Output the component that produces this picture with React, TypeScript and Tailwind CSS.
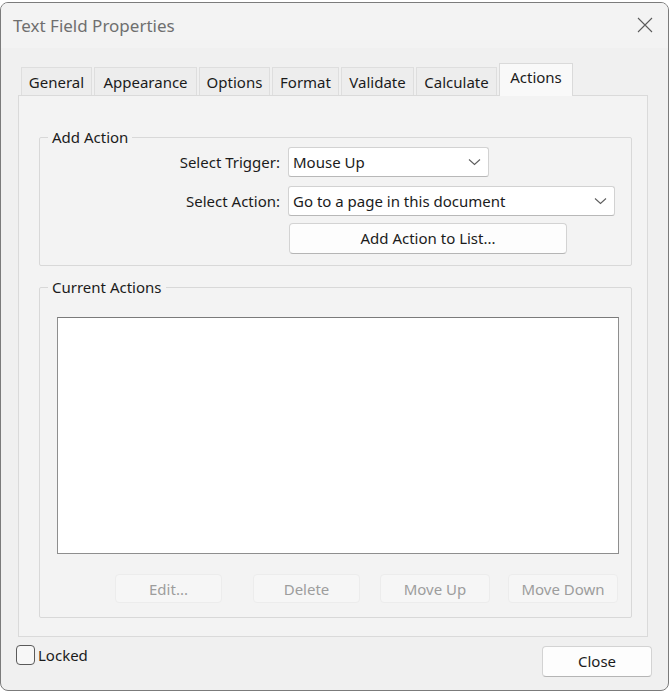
import React from 'react'

const font = { fontFamily: '"Noto Sans", "Open Sans", sans-serif' }

// tab label + pixel width as measured from the dialog
const tabs = [
  { label: 'General', w: 'w-[71px]' },
  { label: 'Appearance', w: 'w-[103px]' },
  { label: 'Options', w: 'w-[71px]' },
  { label: 'Format', w: 'w-[67px]' },
  { label: 'Validate', w: 'w-[73px]' },
  { label: 'Calculate', w: 'w-[81px]' },
]

function Chevron() {
  return (
    <svg width="13" height="8" viewBox="0 0 13 8" className="shrink-0">
      <path d="M1 1.5 L6.5 6.5 L12 1.5" fill="none" stroke="#5f5f5f" strokeWidth="1.1" />
    </svg>
  )
}

function Dropdown({ value, width }: { value: string; width: string }) {
  return (
    <div
      className={`${width} h-[30px] flex items-center justify-between pl-[4px] pr-[7px] bg-white border border-[#d2d2d2] border-b-[#b8b8b8] rounded-[3px] text-[15px] text-[#1b1b1b]`}
    >
      <span>{value}</span>
      <Chevron />
    </div>
  )
}

function DisabledButton({ label, width, ml }: { label: string; width: string; ml: string }) {
  return (
    <div
      className={`${width} ${ml} h-[29px] flex items-center justify-center rounded-[4px] bg-[#f6f6f6] border border-[#ececec] text-[15px] text-[#9d9d9d] pt-[1px]`}
    >
      {label}
    </div>
  )
}

export default function App() {
  return (
    <div className="w-[670px] h-[696px] bg-white pt-[2px]" style={font}>
      <div className="w-[669px] h-[689px] border border-[#7b7b7b] rounded-[8px] overflow-hidden bg-[#f0f0f0] flex flex-col">
        {/* Title bar */}
        <div className="h-[45px] shrink-0 bg-[#f3f3f3] flex items-center justify-between pl-[12px] pr-[15px]">
          <span className="text-[17px] text-[#6f6f6f] leading-none pb-[1px]">Text Field Properties</span>
          <svg width="16" height="16" viewBox="0 0 16 16" className="mb-[1px]">
            <path d="M1 1 L15 15 M15 1 L1 15" stroke="#5c5c5c" strokeWidth="1.1" fill="none" />
          </svg>
        </div>

        <div className="flex-1 pl-[17px] pt-[15px]">
          {/* Tabs */}
          <div className="flex items-end h-[32px] pl-[3px] gap-[2px] relative z-10">
            {tabs.map((t) => (
              <div
                key={t.label}
                className={`${t.w} h-[28px] flex items-center justify-center bg-[#ededed] border border-[#dedede] border-b-0 text-[15px] text-[#1b1b1b] leading-none pt-[1px]`}
              >
                {t.label}
              </div>
            ))}
            <div className="h-[33px] w-[74px] -mb-[1px] flex items-start justify-center pt-[6px] bg-[#f9f9f9] border border-[#dadada] border-b-0 text-[15px] text-[#1b1b1b] leading-none">
              Actions
            </div>
          </div>

          {/* Tab panel */}
          <div className="w-[630px] h-[542px] border border-[#dadada] bg-[#f3f3f3] pl-[20px] pr-[15px] pt-[31px]">
            <fieldset className="h-[139px] border border-[#d8d8d8] rounded-[2px] px-0">
              <legend className="ml-[8px] px-[4px] text-[15px] text-[#1b1b1b] leading-[20px]">Add Action</legend>
              <div className="flex flex-col gap-[9px]">
                <div className="flex items-center">
                  <span className="w-[248px] pr-[8px] text-right text-[15px] text-[#1b1b1b]">Select Trigger:</span>
                  <Dropdown value="Mouse Up" width="w-[201px]" />
                </div>
                <div className="flex items-center">
                  <span className="w-[248px] pr-[8px] text-right text-[15px] text-[#1b1b1b]">Select Action:</span>
                  <Dropdown value="Go to a page in this document" width="w-[327px]" />
                </div>
              </div>
              <div className="mt-[7px] ml-[249px] w-[278px] h-[31px] flex items-center justify-center bg-[#fdfdfd] border border-[#d3d3d3] border-b-[#b5b5b5] rounded-[4px] text-[15px] text-[#1b1b1b]">
                Add Action to List...
              </div>
            </fieldset>

            <fieldset className="mt-[11px] h-[341px] border border-[#d8d8d8] rounded-[2px] px-0">
              <legend className="ml-[8px] px-[4px] text-[15px] text-[#1b1b1b] leading-[20px]">Current Actions</legend>
              <div className="ml-[17px] mt-[20px] w-[562px] h-[237px] bg-white border border-[#8e8e8e] border-t-[#7a7a7a]" />
              <div className="flex mt-[20px]">
                <DisabledButton label="Edit..." width="w-[107px]" ml="ml-[75px]" />
                <DisabledButton label="Delete" width="w-[107px]" ml="ml-[31px]" />
                <DisabledButton label="Move Up" width="w-[110px]" ml="ml-[20px]" />
                <DisabledButton label="Move Down" width="w-[110px]" ml="ml-[18px]" />
              </div>
            </fieldset>
          </div>

          {/* Footer */}
          <div className="flex items-start justify-between pr-[16px]">
            <label className="flex items-center mt-[8px] -ml-[2px]">
              <span className="w-[19px] h-[20px] border border-[#5a5a5a] rounded-[4px] bg-[#f7f7f7]" />
              <span className="ml-[3px] text-[15px] text-[#1b1b1b] leading-none">Locked</span>
            </label>
            <div className="mt-[9px] w-[110px] h-[31px] flex items-center justify-center bg-[#fdfdfd] border border-[#d3d3d3] border-b-[#b5b5b5] rounded-[4px] text-[15px] text-[#1b1b1b]">
              Close
            </div>
          </div>
        </div>
      </div>
    </div>
  )
}
